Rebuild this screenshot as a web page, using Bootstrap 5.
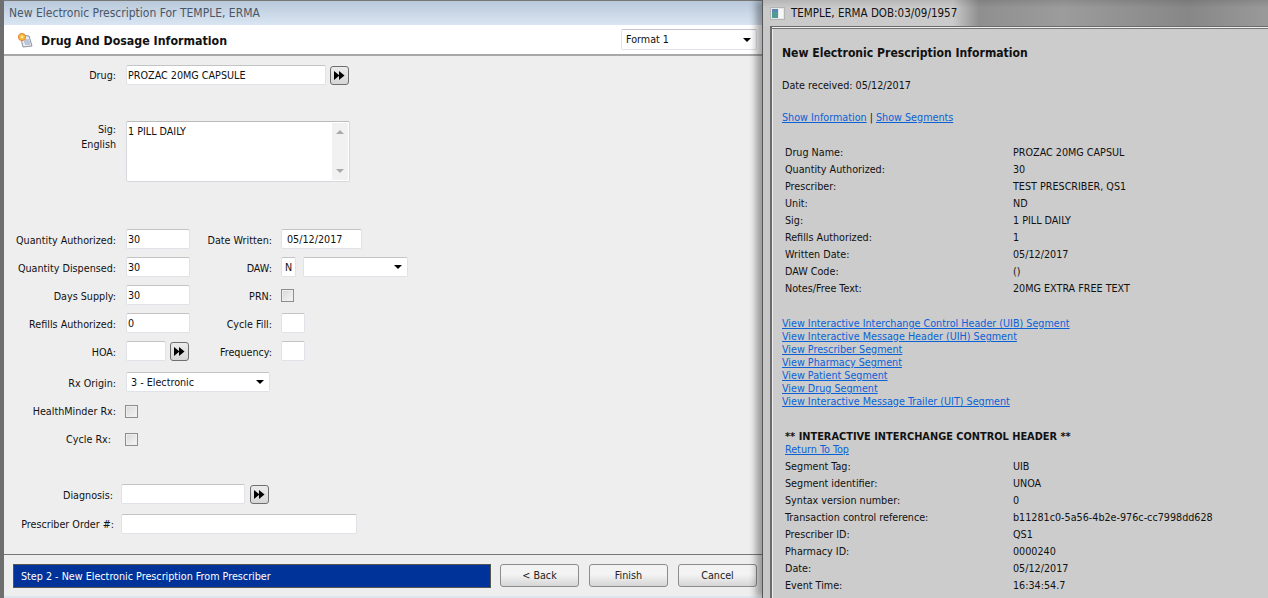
<!DOCTYPE html>
<html lang="en">
<head>
<meta charset="utf-8">
<title>New Electronic Prescription</title>
<link href="https://cdn.jsdelivr.net/npm/bootstrap@5.3.0/dist/css/bootstrap.min.css" rel="stylesheet">
<style>
html,body{height:598px;overflow:hidden}
body{font-family:"DejaVu Sans Condensed","DejaVu Sans","Liberation Sans",sans-serif;font-size:10.7px;line-height:13px;color:#111;background:#888}
.desk{width:1268px;height:598px}
.rx-win{width:762px;height:598px;background:#eee;border-left:4px solid #6e6e6e;flex:none}
.rx-title{height:25px;background:linear-gradient(#b9c9da,#d9e5f2);color:#4a5666;font-size:12px;padding-left:5px;border-top:1px solid #777}
.rx-head{height:31px;background:#fff;border-bottom:2px solid #a8a8a8;padding:0 5px 0 13px}
.rx-head h1{font-size:12.3px;font-weight:700;margin:2px 0 0 8px;color:#111;line-height:16px}
.rx-body{flex:1 1 auto;min-height:0}
.rw{display:flex;align-items:center;height:20px;margin-bottom:8px}
.lb{width:112px;text-align:right;flex:none;margin-right:10px;white-space:nowrap}
.lb2{width:66px;margin-left:16px;margin-right:9px;text-align:right;flex:none;white-space:nowrap}
.low{padding-top:2px}
.lb.diag{width:109px;margin-right:8px}
.lb.pres{width:110px;margin-right:7px}
.form-control.fld,.form-select.fld{height:20px;min-height:0;padding:0 1px;font-size:10.7px;line-height:18px;color:#111;border:1px solid #dfe3e8;border-top-color:#c4c4c4;border-radius:2px;background-color:#fff;box-shadow:none;font-family:inherit}
.form-select.fld{padding-left:4px;background-image:url("data:image/svg+xml,%3Csvg xmlns='http://www.w3.org/2000/svg' width='8' height='4'%3E%3Cpath d='M0 0h8L4 4z' fill='%23000'/%3E%3C/svg%3E");background-position:right 5px center;background-size:8px 4px}
.form-select.fmt{width:136px;height:21px}
.form-select.fld.w144{width:144px;padding-top:1px}
.form-select.fld.w105{width:105px;margin-left:7px}
.form-control.fld.dt{width:81px;padding-left:5px}
.w200{width:200px}.w64{width:64px}.w40{width:40px}.w24{width:24px}.w15{width:15px;text-align:center}.w124{width:124px}.w236{width:236px}
.ff{width:19px;height:19px;padding:0;margin-left:4px;border:1px solid #6f6f6f;border-radius:3px;background:linear-gradient(#ececec,#d6d6d6);display:flex;align-items:center;justify-content:center;flex:none}
.sigbox{width:224px;height:61px;background:#fff;border:1px solid #d5d8dc;border-top-color:#bbb;border-radius:2px;padding:3px 1px 1px}
.sigbar{width:16px;margin:-2px 0 0;background:#f1f1f1;flex:none;padding:7px 0}
.tick{width:13px;height:13px;margin-left:-1px;border:1px solid #8e8e8e;background:linear-gradient(135deg,#d8d8d8,#f6f6f6);box-shadow:inset 0 0 0 1px #eee;flex:none}
.rx-foot{height:44px;border-top:1px solid #777;border-bottom:2px solid #dde6ee;padding:9px 3px 0 9px;background:#eee}
.stepbar{width:478px;height:24px;background:#003399;border:1px solid #555;color:#fff;padding-left:7px;flex:none}
.btn.wbtn{width:79px;height:23px;padding:0;margin-left:10px;font-size:10.7px;line-height:21px;color:#222;border:1px solid #8c8c8c;border-radius:3px;background:linear-gradient(#f3f3f3 45%,#d6d6d6)}
.btn.first{margin-left:9px}
.rx-side{width:506px;height:598px;flex:none;background:#c8c8c8;box-shadow:-6px 0 7px rgba(0,0,0,.35);border-left:1px solid #555;position:relative}
.side-title{height:26px;padding-left:7px;color:#111;font-size:11.5px;background:linear-gradient(rgba(0,0,0,.1),transparent 30%),linear-gradient(90deg,#cacaca 0,#cacaca 190px,#8f8f8f 216px,#9c9c9c 300px,#878787 425px,#9a9a9a 506px)}
.side-title svg{margin-right:6px}
.side-body{flex:1 1 auto;min-height:0;margin-left:7px;background:#ccc;border-left:2px solid #6b6b6b;border-top:1px solid #6b6b6b;box-shadow:inset 0 1px 0 #eee,inset 0 2px 0 #777,inset 1px 0 0 #eee;padding:18px 0 0 10px;overflow:hidden}
.side-body h2{font-size:12.1px;font-weight:700;margin:0;line-height:16px;color:#111}
.side-body a{color:#0a62d6;text-decoration:underline}
.kv{display:flex;height:17px;margin-left:3px;align-items:center}
.kv span:first-child{width:228px;flex:none}
.lnk{height:13px}
.sec-h{margin:0 0 0 3px;height:13px;font-weight:700;font-size:10.9px;line-height:13px}
.sec-top{margin-left:3px;height:15px}
</style>
</head>
<body>
<div class="desk d-flex">
  <section class="rx-win d-flex flex-column">
    <div class="rx-title d-flex align-items-center">New Electronic Prescription For TEMPLE, ERMA</div>
    <header class="rx-head d-flex align-items-center">
      <svg width="16" height="16" viewBox="0 0 16 16"><path d="M3 3l9 1 3 10-9 1z" fill="#e8ebf0" stroke="#8a93a3"/><path d="M7 8h5M7 10h6M8 12h5" stroke="#8fa0bd"/><circle cx="5" cy="5" r="3.6" fill="#f4b93a" stroke="#e6863a"/><circle cx="5" cy="5" r="1.400" fill="#ffe98a"/></svg>
      <h1>Drug And Dosage Information</h1>
      <select class="form-select fld fmt ms-auto" aria-label="Format"><option>Format 1</option></select>
    </header>
    <main class="rx-body">
      <div class="rw" style="margin-top:9px;margin-bottom:36px"><label class="lb">Drug:</label><input class="form-control fld w200" value="PROZAC 20MG CAPSULE"><button class="ff" type="button" aria-label="Search"><svg width="11" height="9" viewBox="0 0 11 9"><path d="M0 0l5.500 4.500L0 9zM5 0l5.500 4.500L5 9z"/></svg></button></div>
      <div class="d-flex" style="height:61px;margin-bottom:47px">
        <div class="lb" style="padding-top:2px">Sig:<br><span style="display:block;margin-top:2px">English</span></div>
        <div class="sigbox d-flex"><div class="flex-grow-1">1 PILL DAILY</div><div class="sigbar d-flex flex-column justify-content-between align-items-center"><svg width="8" height="4"><path d="M0 4h8L4 0z" fill="#aaa"/></svg><svg width="8" height="4"><path d="M0 0h8L4 4z" fill="#aaa"/></svg></div></div>
      </div>
      <div class="rw"><label class="lb low">Quantity Authorized:</label><input class="form-control fld w64" value="30"><label class="lb2 low">Date Written:</label><input class="form-control fld dt" value="05/12/2017"></div>
      <div class="rw"><label class="lb low">Quantity Dispensed:</label><input class="form-control fld w64" value="30"><label class="lb2 low">DAW:</label><input class="form-control fld w15" value="N"><select class="form-select fld w105" aria-label="DAW"><option></option></select></div>
      <div class="rw"><label class="lb low">Days Supply:</label><input class="form-control fld w64" value="30"><label class="lb2 low">PRN:</label><span class="tick ms-0"></span></div>
      <div class="rw"><label class="lb low">Refills Authorized:</label><input class="form-control fld w64" value="0"><label class="lb2 low">Cycle Fill:</label><input class="form-control fld w24"></div>
      <div class="rw" style="margin-bottom:11px"><label class="lb low">HOA:</label><input class="form-control fld w40"><button class="ff" type="button" aria-label="Search"><svg width="11" height="9" viewBox="0 0 11 9"><path d="M0 0l5.500 4.500L0 9zM5 0l5.500 4.500L5 9z"/></svg></button><label class="lb2 low" style="margin-left:17px">Frequency:</label><input class="form-control fld w24"></div>
      <div class="rw" style="margin-bottom:9px"><label class="lb low">Rx Origin:</label><select class="form-select fld w144" aria-label="Rx Origin"><option>3 - Electronic</option></select></div>
      <div class="rw" style="margin-bottom:8px"><label class="lb">HealthMinder Rx:</label><span class="tick"></span></div>
      <div class="rw" style="margin-bottom:35px"><label class="lb" style="padding-right:5px">Cycle Rx:</label><span class="tick"></span></div>
      <div class="rw" style="margin-bottom:10px"><label class="lb low diag">Diagnosis:</label><input class="form-control fld w124"><button class="ff" style="margin-left:5px" type="button" aria-label="Search"><svg width="11" height="9" viewBox="0 0 11 9"><path d="M0 0l5.500 4.500L0 9zM5 0l5.500 4.500L5 9z"/></svg></button></div>
      <div class="rw mb-0"><label class="lb pres">Prescriber Order #:</label><input class="form-control fld w236"></div>
    </main>
    <footer class="rx-foot d-flex align-items-start">
      <div class="stepbar d-flex align-items-center">Step 2 - New Electronic Prescription From Prescriber</div>
      <button class="btn wbtn first" type="button">&lt; Back</button>
      <button class="btn wbtn" type="button">Finish</button>
      <button class="btn wbtn" type="button">Cancel</button>
    </footer>
  </section>
  <aside class="rx-side d-flex flex-column">
    <div class="side-title d-flex align-items-center">
      <svg width="15" height="13" viewBox="0 0 15 13"><rect x=".5" y=".5" width="14" height="12" fill="#e6e8e8" stroke="#b4b4b4"/><rect x="2" y="2" width="6" height="9" fill="#4f9a96"/><rect x="2" y="2" width="6" height="3" fill="#5b86b4"/><rect x="9" y="2" width="4" height="9" fill="#f7f7f7"/></svg>
      <span>TEMPLE, ERMA DOB:03/09/1957</span>
    </div>
    <div class="side-body">
      <h2>New Electronic Prescription Information</h2>
      <p style="margin:18px 0 19px">Date received: 05/12/2017</p>
      <p style="margin:0 0 20px"><a href="#">Show Information</a> | <a href="#">Show Segments</a></p>
      <div style="margin-bottom:20px">
        <div class="kv"><span>Drug Name:</span><span>PROZAC 20MG CAPSUL</span></div>
        <div class="kv"><span>Quantity Authorized:</span><span>30</span></div>
        <div class="kv"><span>Prescriber:</span><span>TEST PRESCRIBER, QS1</span></div>
        <div class="kv"><span>Unit:</span><span>ND</span></div>
        <div class="kv"><span>Sig:</span><span>1 PILL DAILY</span></div>
        <div class="kv"><span>Refills Authorized:</span><span>1</span></div>
        <div class="kv"><span>Written Date:</span><span>05/12/2017</span></div>
        <div class="kv"><span>DAW Code:</span><span>()</span></div>
        <div class="kv"><span>Notes/Free Text:</span><span>20MG EXTRA FREE TEXT</span></div>
      </div>
      <div style="margin-bottom:22px">
        <div class="lnk"><a href="#">View Interactive Interchange Control Header (UIB) Segment</a></div>
        <div class="lnk"><a href="#">View Interactive Message Header (UIH) Segment</a></div>
        <div class="lnk"><a href="#">View Prescriber Segment</a></div>
        <div class="lnk"><a href="#">View Pharmacy Segment</a></div>
        <div class="lnk"><a href="#">View Patient Segment</a></div>
        <div class="lnk"><a href="#">View Drug Segment</a></div>
        <div class="lnk"><a href="#">View Interactive Message Trailer (UIT) Segment</a></div>
      </div>
      <div class="sec-h">** INTERACTIVE INTERCHANGE CONTROL HEADER **</div>
      <div class="sec-top"><a href="#">Return To Top</a></div>
      <div class="kv"><span>Segment Tag:</span><span>UIB</span></div>
      <div class="kv"><span>Segment identifier:</span><span>UNOA</span></div>
      <div class="kv"><span>Syntax version number:</span><span>0</span></div>
      <div class="kv"><span>Transaction control reference:</span><span>b11281c0-5a56-4b2e-976c-cc7998dd628</span></div>
      <div class="kv"><span>Prescriber ID:</span><span>QS1</span></div>
      <div class="kv"><span>Pharmacy ID:</span><span>0000240</span></div>
      <div class="kv"><span>Date:</span><span>05/12/2017</span></div>
      <div class="kv"><span>Event Time:</span><span>16:34:54.7</span></div>
    </div>
  </aside>
</div>
<script src="https://cdn.jsdelivr.net/npm/bootstrap@5.3.0/dist/js/bootstrap.bundle.min.js"></script>
</body>
</html>
